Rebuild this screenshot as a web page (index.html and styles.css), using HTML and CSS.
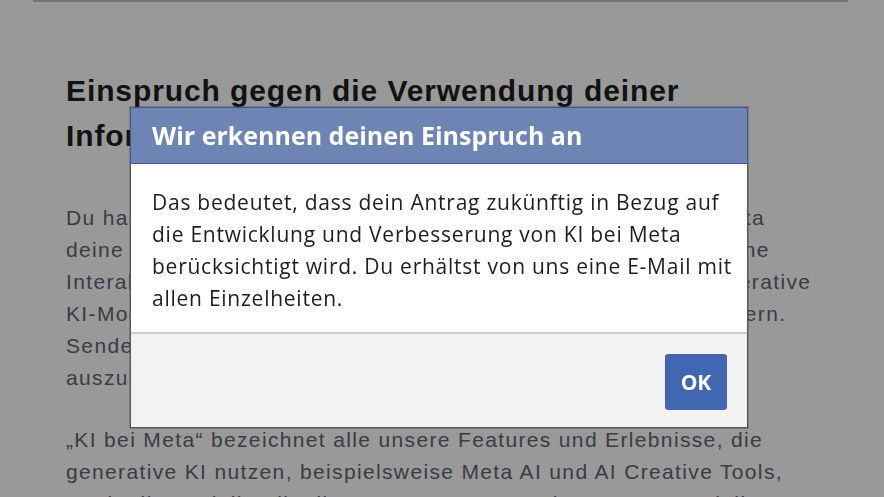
FILE: index.html
```html
<!DOCTYPE html>
<html lang="de">
<head>
<meta charset="utf-8">
<title>Einspruch</title>
<link rel="stylesheet" href="styles.css">
</head>
<body>
<div class="topbar"></div>
<main class="page">
  <h1 class="page-title">Einspruch gegen die Verwendung deiner<br>Informationen für KI bei Meta</h1>
  <p class="page-text">Du hast das Recht, Einspruch dagegen einzulegen, dass bei Meta<br>deine Informationen in unseren Produkten und Diensten und deine<br>Interaktionen mit den KI-Funktionen verwendet werden, um generative<br>KI-Modelle und Features bei Meta zu entwickeln und zu verbessern.<br>Sende dieses Formular ab, um dieses Recht<br>auszuüben.</p>
  <p class="page-text">„KI bei Meta“ bezeichnet alle unsere Features und Erlebnisse, die<br>generative KI nutzen, beispielsweise Meta AI und AI Creative Tools,<br>sowie die Modelle, die diese unterstützen, und unsere KI-Modelle.</p>
</main>
<div class="overlay"></div>
<div class="dialog" role="dialog">
  <div class="dialog-head">Wir erkennen deinen Einspruch an</div>
  <div class="dialog-body">Das bedeutet, dass dein Antrag zukünftig in Bezug auf<br>die Entwicklung und Verbesserung von KI bei Meta<br>berücksichtigt wird. Du erhältst von uns eine E-Mail mit<br>allen Einzelheiten.</div>
  <div class="dialog-foot"><button class="ok-btn">OK</button></div>
</div>
</body>
</html>
```
FILE: styles.css
```css
html, body {
  margin: 0;
  padding: 0;
  background: #ffffff;
  height: 100%;
  overflow: hidden;
}
.topbar {
  margin-left: 33px;
  width: 815px;
  height: 2px;
  background: #c4c4c4;
}
.page {
  padding-left: 66px;
  font-family: "Liberation Sans", Arial, sans-serif;
}
.page-title {
  margin: 66px 0 0;
  font-size: 30px;
  line-height: 45px;
  font-weight: 700;
  letter-spacing: 0.9px;
  color: #1c1e21;
  white-space: nowrap;
}
.page-text {
  margin: 44px 0 0;
  font-size: 21px;
  line-height: 32px;
  letter-spacing: 1.35px;
  color: #606770;
  white-space: nowrap;
}
.page-text + .page-text {
  margin-top: 30px;
}
.overlay {
  position: fixed;
  inset: 0;
  background: rgba(0, 0, 0, 0.4);
}
.dialog {
  position: fixed;
  left: 130px;
  top: 107px;
  width: 616px;
  border: 1px solid #555555;
  background: #ffffff;
  font-family: "Open Sans", Lato, sans-serif;
  box-shadow: 0 0 0 1px rgba(70, 70, 70, 0.35);
}
.dialog-head {
  background: #6d84b4;
  border: 1px solid #3b5998;
  margin: -1px -1px 0;
  height: 55px;
  padding-left: 21px;
  color: #ffffff;
  font-weight: 700;
  font-size: 25px;
  line-height: 55px;
}
.dialog-body {
  padding: 22px 21px 18px;
  font-size: 21px;
  line-height: 32px;
  letter-spacing: 0.75px;
  color: #1c1e21;
  white-space: nowrap;
}
.dialog-foot {
  border-top: 2px solid #cccccc;
  background: #f2f2f2;
  display: flex;
  justify-content: flex-end;
  padding: 20px 20px 17px;
}
.ok-btn {
  width: 62px;
  height: 56px;
  border: 0;
  border-radius: 3px;
  background: #4267b2;
  color: #ffffff;
  font-family: "Open Sans", Lato, sans-serif;
  font-weight: 700;
  font-size: 21px;
  padding: 0;
}
```
